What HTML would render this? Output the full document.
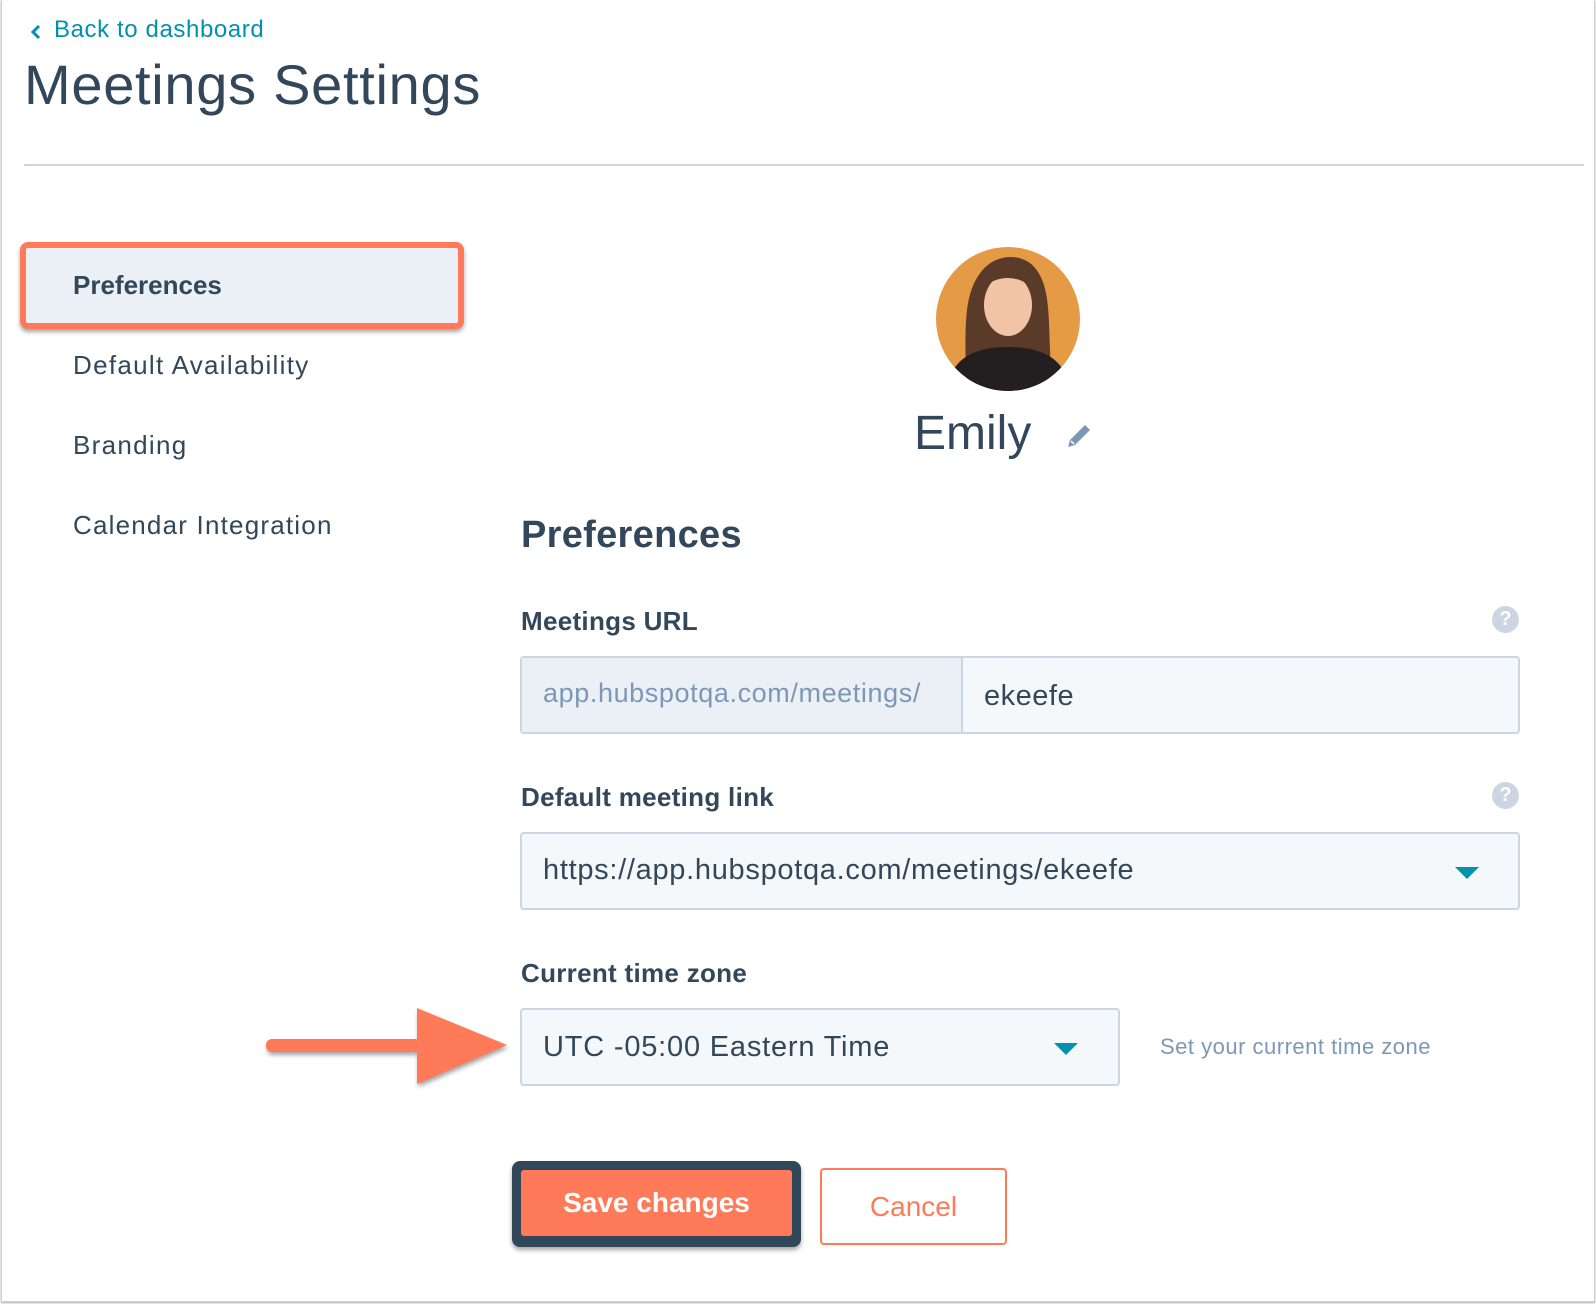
<!DOCTYPE html>
<html><head><meta charset="utf-8"><style>
*{box-sizing:border-box;margin:0;padding:0}
body{width:1596px;height:1304px;background:#fff;font-family:"Liberation Sans",sans-serif;color:#33475b;position:relative;overflow:hidden}
.frame{position:absolute;left:1px;top:0;width:1594px;height:1302px;border:1px solid #cfcfcf;border-top:none;box-shadow:0 1px 2px #aaa}
.a{position:absolute;white-space:nowrap}
.lbl{font-size:26px;font-weight:bold;color:#33475b;letter-spacing:0.3px}
.input{position:absolute;background:#f5f8fa;border:2px solid #cbd6e2;border-radius:4px}
.tri{position:absolute;width:0;height:0;border-left:12px solid transparent;border-right:12px solid transparent;border-top:12px solid #0091ae}
.help{position:absolute;width:27px;height:27px;border-radius:50%;background:#cbd6e2;color:#fff;font-weight:bold;font-size:20px;text-align:center;line-height:27px}
</style></head><body>
<div class="frame"></div>
<svg class="a" style="left:30px;top:24px" width="12" height="16" viewBox="0 0 12 16"><path d="M9 2 L3 8 L9 14" stroke="#0091ae" stroke-width="3" fill="none"/></svg>
<div class="a" style="left:54px;top:16px;font-size:24px;color:#0091ae;letter-spacing:0.6px">Back to dashboard</div>
<div class="a" style="left:24px;top:52px;font-size:56px;color:#33475b;letter-spacing:0.7px">Meetings Settings</div>
<div class="a" style="left:24px;top:164px;width:1560px;height:2px;background:#cbd6e2"></div>

<div class="a" style="left:20px;top:242px;width:444px;height:87px;border:6px solid #ff7a59;border-radius:8px;background:#eaf0f6;box-shadow:0 3px 4px rgba(0,0,0,.35)"></div>
<div class="a" style="left:73px;top:270px;font-size:26px;font-weight:bold">Preferences</div>
<div class="a" style="left:73px;top:350px;font-size:26px;letter-spacing:1.3px">Default Availability</div>
<div class="a" style="left:73px;top:430px;font-size:26px;letter-spacing:1.3px">Branding</div>
<div class="a" style="left:73px;top:510px;font-size:26px;letter-spacing:1.2px">Calendar Integration</div>

<svg class="a" style="left:936px;top:247px" width="144" height="144" viewBox="0 0 144 144">
<defs><clipPath id="c"><circle cx="72" cy="72" r="72"/></clipPath></defs>
<g clip-path="url(#c)">
<rect width="144" height="144" fill="#e59a45"/>
<path d="M30 150 C30 90 25 50 45 25 C60 5 90 5 102 25 C118 50 110 90 118 150Z" fill="#5a3a28"/>
<ellipse cx="72" cy="58" rx="24" ry="31" fill="#f0c4a4"/>
<path d="M48 40 C55 15 95 15 98 45 C90 30 65 25 48 40Z" fill="#5a3a28"/>
<path d="M10 144 C15 110 40 100 72 100 C104 100 130 110 134 144Z" fill="#231f20"/>
</g></svg>
<div class="a" style="left:914px;top:406px;font-size:48px">Emily</div>
<svg class="a" style="left:1064px;top:421px" width="30" height="30" viewBox="0 0 30 30"><path d="M4 26 L6 19 L21 4 L26 9 L11 24 Z" fill="#7c98b6"/><path d="M7 20 L10 23" stroke="#fff" stroke-width="1.5"/></svg>

<div class="a" style="left:521px;top:514px;font-size:38px;font-weight:bold;letter-spacing:0.3px">Preferences</div>

<div class="a lbl" style="left:521px;top:606px">Meetings URL</div>
<div class="help" style="left:1492px;top:606px">?</div>
<div class="input" style="left:520px;top:656px;width:1000px;height:78px"></div>
<div class="a" style="left:522px;top:658px;width:441px;height:74px;background:#eaf0f6;border-right:2px solid #cbd6e2"></div>
<div class="a" style="left:543px;top:678px;font-size:27px;color:#7c98b6;letter-spacing:0.6px">app.hubspotqa.com/meetings/</div>
<div class="a" style="left:984px;top:680px;font-size:29px;letter-spacing:0.5px">ekeefe</div>

<div class="a lbl" style="left:521px;top:782px">Default meeting link</div>
<div class="help" style="left:1492px;top:782px">?</div>
<div class="input" style="left:520px;top:832px;width:1000px;height:78px"></div>
<div class="a" style="left:543px;top:854px;font-size:29px;letter-spacing:0.7px">https://app.hubspotqa.com/meetings/ekeefe</div>
<div class="tri" style="left:1455px;top:867px"></div>

<div class="a lbl" style="left:521px;top:958px">Current time zone</div>
<div class="input" style="left:520px;top:1008px;width:600px;height:78px"></div>
<div class="a" style="left:543px;top:1031px;font-size:29px;letter-spacing:0.8px">UTC -05:00 Eastern Time</div>
<div class="tri" style="left:1054px;top:1043px"></div>
<div class="a" style="left:1160px;top:1034px;font-size:22px;color:#7c98b6;letter-spacing:0.5px">Set your current time zone</div>

<svg class="a" style="left:262px;top:1004px" width="250" height="86" viewBox="0 0 250 86">
<g fill="#ff7a59" style="filter:drop-shadow(1px 3px 2px rgba(0,0,0,.35))">
<rect x="4" y="35" width="155" height="13" rx="6"/>
<path d="M155 4 L245 41 L155 80 Z"/></g></svg>

<div class="a" style="left:512px;top:1161px;width:289px;height:86px;background:#33475b;border-radius:8px;box-shadow:0 3px 5px rgba(0,0,0,.35)"></div>
<div class="a" style="left:521px;top:1170px;width:271px;height:66px;background:#ff7a59;border-radius:3px;color:#fff;font-size:28px;text-align:center;line-height:66px;font-weight:bold">Save changes</div>
<div class="a" style="left:820px;top:1168px;width:187px;height:77px;border:2px solid #ff7a59;border-radius:4px;color:#ff7a59;font-size:28px;text-align:center;line-height:73px">Cancel</div>
</body></html>
